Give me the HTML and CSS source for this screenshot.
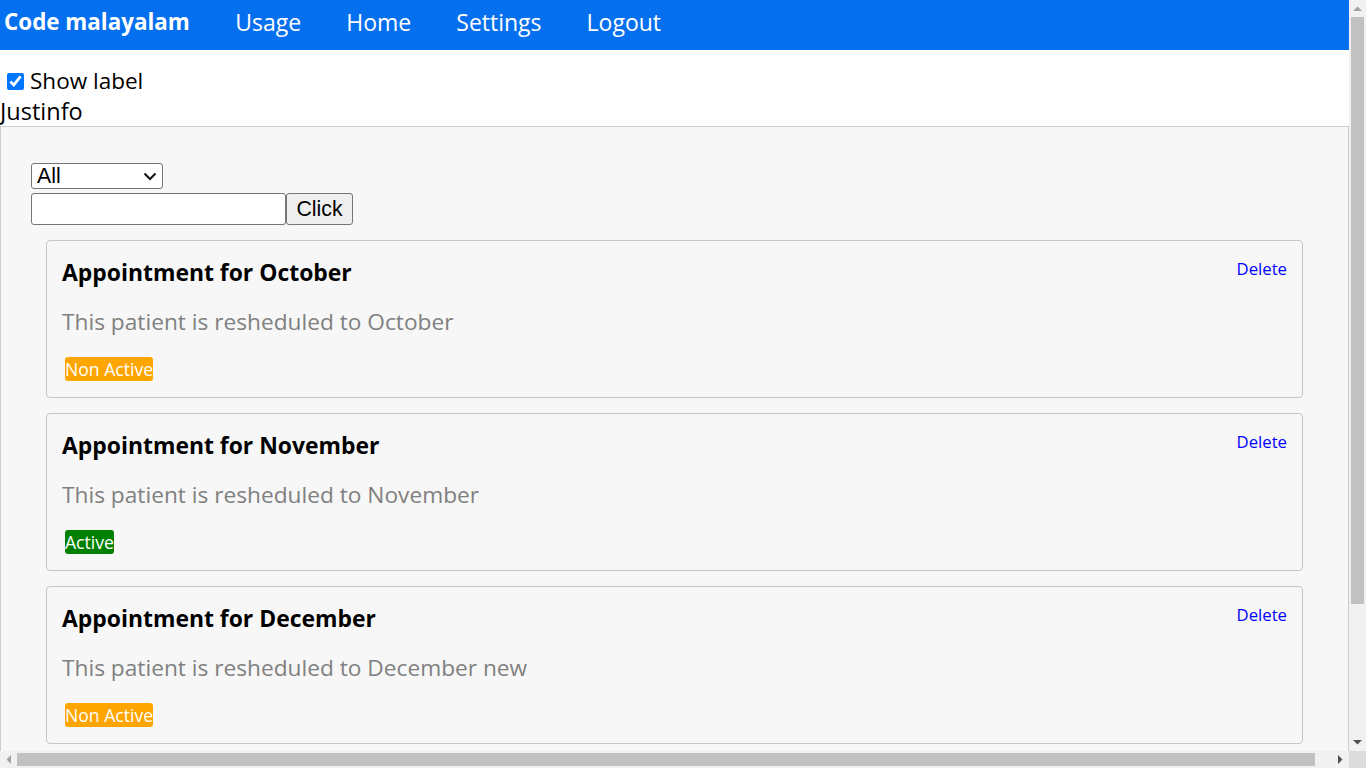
FILE: index.html
```html
<!DOCTYPE html>
<html lang="en">
<head>
<meta charset="utf-8">
<title>Code malayalam</title>
<link rel="stylesheet" href="styles.css">
</head>
<body>
<nav class="navbar">
  <a class="brand" href="#">Code malayalam</a>
  <a class="nav-link" href="#">Usage</a>
  <a class="nav-link" href="#">Home</a>
  <a class="nav-link" href="#">Settings</a>
  <a class="nav-link" href="#">Logout</a>
</nav>
<label class="toggle"><input class="toggle-box" type="checkbox" checked> Show label</label>
<div class="page-title">Justinfo</div>
<section class="panel">
  <div class="filters">
    <div class="select-wrap">
      <select class="filter-select"><option>All</option><option>Active</option><option>Non Active</option></select>
      <svg class="chevron" width="14" height="9" viewBox="0 0 14 9"><path d="M1.5 1.5 L7 7 L12.5 1.5" fill="none" stroke="#111" stroke-width="2"/></svg>
    </div>
    <div class="search-row"><input class="search-input" type="text"><button class="search-btn">Click</button></div>
  </div>
  <div class="cards">
    <article class="card">
      <div class="card-head"><h5 class="card-title">Appointment for October</h5><a class="delete" href="#">Delete</a></div>
      <p class="card-text">This patient is resheduled to October</p>
      <span class="badge badge-off">Non Active</span>
    </article>
    <article class="card">
      <div class="card-head"><h5 class="card-title">Appointment for November</h5><a class="delete" href="#">Delete</a></div>
      <p class="card-text">This patient is resheduled to November</p>
      <span class="badge badge-on">Active</span>
    </article>
    <article class="card">
      <div class="card-head"><h5 class="card-title">Appointment for December</h5><a class="delete" href="#">Delete</a></div>
      <p class="card-text">This patient is resheduled to December new</p>
      <span class="badge badge-off">Non Active</span>
    </article>
  </div>
</section>

<div class="scrollbar scrollbar-v" aria-hidden="true">
  <span class="sb-btn"><svg width="9" height="5" viewBox="0 0 9 5"><path d="M0 5 L4.5 0.5 L9 5 Z" fill="#a3a3a3"/></svg></span>
  <span class="sb-track"><span class="sb-thumb sb-thumb-v"></span></span>
  <span class="sb-btn"><svg width="9" height="5" viewBox="0 0 9 5"><path d="M0 0 L4.5 4.5 L9 0 Z" fill="#505050"/></svg></span>
</div>
<div class="scrollbar scrollbar-h" aria-hidden="true">
  <span class="sb-btn"><svg width="5" height="9" viewBox="0 0 5 9"><path d="M5 0 L0.5 4.5 L5 9 Z" fill="#a3a3a3"/></svg></span>
  <span class="sb-track"><span class="sb-thumb sb-thumb-h"></span></span>
  <span class="sb-btn"><svg width="5" height="9" viewBox="0 0 5 9"><path d="M0 0 L4.5 4.5 L0 9 Z" fill="#505050"/></svg></span>
</div>
<div class="sb-corner" aria-hidden="true"></div>
</body>
</html>
```
FILE: styles.css
```css
html, body {
  margin: 0;
  padding: 0;
}
body {
  font-family: "Open Sans", "Noto Sans", sans-serif;
  font-size: 22.7px;
  color: #000;
  background: #fff;
  min-width: 1367px;
}
.navbar {
  height: 50px;
  background: #0570ef;
  display: flex;
  align-items: center;
  padding: 0 0 7px 4px;
  box-sizing: border-box;
}
.navbar a {
  color: #fff;
  text-decoration: none;
  font-size: 23px;
  line-height: 30px;
}
.navbar .brand {
  font-weight: 700;
  font-size: 22.4px;
  margin-right: 23px;
}
.nav-link {
  padding: 0 22.5px;
}
.toggle {
  display: flex;
  align-items: center;
  height: 30px;
  margin-top: 16px;
  padding-left: 7px;
  line-height: 30px;
  font-size: 22.5px;
}
.toggle-box {
  width: 17px;
  height: 17px;
  margin: 0 6px 0 0;
  accent-color: #0075ff;
}
.page-title {
  height: 30px;
  line-height: 30px;
  font-size: 23.5px;
}
.panel {
  width: 1349px;
  box-sizing: border-box;
  border: 1px solid #cdcdcd;
  background: #f7f7f7;
  padding: 36px 45px 172px 30px;
}
.filters {
  display: flex;
  flex-direction: column;
  align-items: flex-start;
  gap: 4px;
}
.select-wrap {
  position: relative;
  display: flex;
}
.filter-select {
  appearance: none;
  -webkit-appearance: none;
  width: 132px;
  height: 26px;
  box-sizing: border-box;
  font-family: "Liberation Sans", Arial, sans-serif;
  font-size: 21.3px;
  line-height: 24px;
  border: 1px solid #767676;
  border-radius: 3px;
  background: #fff;
  color: #000;
  padding: 0 0 0 5px;
}
.chevron {
  position: absolute;
  left: 112px;
  top: 9px;
  pointer-events: none;
}
.search-row {
  display: flex;
}
.search-input {
  width: 255px;
  height: 32px;
  box-sizing: border-box;
  border: 1px solid #767676;
  border-radius: 3px;
  background: #fff;
  font-size: 21.3px;
}
.search-btn {
  width: 67px;
  height: 32px;
  box-sizing: border-box;
  font-family: "Liberation Sans", Arial, sans-serif;
  font-size: 21.3px;
  border: 1px solid #767676;
  border-radius: 3px;
  background: #efefef;
  color: #000;
  padding: 0;
}
.cards {
  display: flex;
  flex-direction: column;
  gap: 15px;
  margin-top: 15px;
  margin-left: 15px;
}
.card {
  border: 1px solid #c6c6c6;
  border-radius: 4px;
  padding: 16px 15px;
  display: flex;
  flex-direction: column;
  align-items: flex-start;
}
.card-head {
  display: flex;
  justify-content: space-between;
  align-items: flex-start;
  align-self: stretch;
}
.card-title {
  margin: 0;
  font-size: 22.9px;
  font-weight: 700;
  line-height: 32px;
}
.delete {
  color: #0000ff;
  text-decoration: none;
  font-size: 16.7px;
  line-height: 24px;
}
.card-text {
  margin: 17px 0 0;
  color: #808080;
  font-size: 22.7px;
  line-height: 32px;
}
.badge {
  margin: 19px 0 0 3px;
  height: 24px;
  line-height: 24px;
  font-size: 17.6px;
  color: #fff;
  border-radius: 3px;
}
.badge-off {
  background: #ffa500;
}
.badge-on {
  background: #008000;
}

/* window scrollbars, drawn over the page edge */
.scrollbar {
  position: fixed;
  display: flex;
  background: #f1f1f1;
}
.scrollbar-v {
  top: 0;
  right: 0;
  bottom: 17px;
  width: 17px;
  flex-direction: column;
}
.scrollbar-h {
  left: 0;
  right: 17px;
  bottom: 0;
  height: 17px;
}
.sb-btn {
  flex: 0 0 17px;
  width: 17px;
  height: 17px;
  display: flex;
  align-items: center;
  justify-content: center;
}
.sb-track {
  flex: 1;
  display: flex;
}
.scrollbar-v .sb-track {
  flex-direction: column;
}
.sb-thumb {
  background: #c1c1c1;
}
.sb-thumb-v {
  height: 587px;
  margin: 0 2px;
}
.sb-thumb-h {
  width: 1298px;
  margin: 2px 0;
}
.sb-corner {
  position: fixed;
  right: 0;
  bottom: 0;
  width: 17px;
  height: 17px;
  background: #dcdcdc;
}
```
